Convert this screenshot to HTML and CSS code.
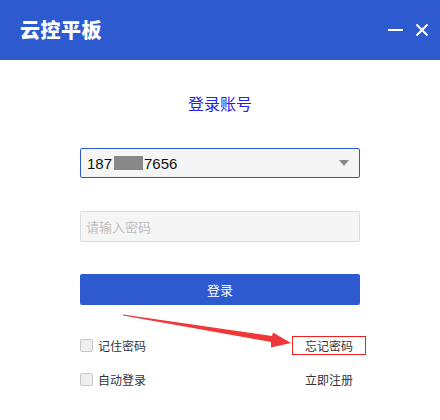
FILE: index.html
```html
<!DOCTYPE html>
<html lang="zh">
<head>
<meta charset="utf-8">
<link rel="stylesheet" href="styles.css">
</head>
<body>
<div class="window">
  <header class="titlebar">
    <div class="app-title">云控平板</div>
    <div class="win-controls">
      <svg class="ctl" width="16" height="14" viewBox="0 0 16 14"><line x1="0" y1="7" x2="15" y2="7" stroke="#fff" stroke-width="2"/></svg>
      <svg class="ctl" width="14" height="14" viewBox="0 0 14 14"><path d="M1.5 1.5 L12.5 12.5 M12.5 1.5 L1.5 12.5" stroke="#fff" stroke-width="2"/></svg>
    </div>
  </header>
  <main class="content">
    <div class="heading">登录账号</div>
    <div class="field select">
      <span class="num">187</span><span class="mask"></span><span class="num">7656</span>
      <span class="caret"></span>
    </div>
    <div class="field pwd">请输入密码</div>
    <button class="login-btn">登录</button>
    <div class="opt-row first">
      <label class="check"><span class="box"></span>记住密码</label>
      <span class="link forgot">忘记密码</span>
    </div>
    <div class="opt-row">
      <label class="check"><span class="box"></span>自动登录</label>
      <span class="link">立即注册</span>
    </div>
  </main>
  <svg class="arrow" width="440" height="420" viewBox="0 0 440 420">
    <polygon points="123,314.5 272,336 273,332.5 291,343 271,347.5 271,342 123,315.5" fill="#f0383a"/>
  </svg>
</div>
</body>
</html>
```
FILE: styles.css
```css
* { box-sizing: border-box; }
html, body { margin: 0; padding: 0; background: #fff; }
body {
  font-family: "Noto Sans CJK SC", "Liberation Sans", sans-serif;
  width: 440px;
  height: 420px;
  overflow: hidden;
}
.window { position: relative; width: 440px; height: 420px; background: #fff; }
.titlebar {
  height: 60px;
  background: #2e5ad0;
  display: flex;
  align-items: center;
  justify-content: space-between;
  padding: 0 11px 0 20px;
}
.app-title {
  color: #fff;
  font-size: 20px;
  font-weight: 900;
  letter-spacing: 0.5px;
  line-height: 20px;
  margin-top: 0px;
}
.win-controls { display: flex; align-items: center; gap: 11px; margin-top: 0px; }
.ctl { display: block; }
.content {
  padding: 32px 80px 0;
  display: flex;
  flex-direction: column;
}
.heading {
  text-align: center;
  color: #2222ee;
  font-size: 16px;
  line-height: 22px;
}
.field {
  height: 30px;
  background: #f5f5f5;
  border: 1px solid #dcdcdc;
  border-radius: 2px;
  display: flex;
  align-items: center;
}
.select {
  margin-top: 34px;
  border-color: #2e5ad0;
  padding-left: 6px;
  position: relative;
}
.num {
  font-family: "Liberation Sans", sans-serif;
  font-size: 15px;
  color: #111;
}
.mask {
  width: 29px;
  height: 14px;
  background: #888;
  margin: 0 1px 0 2px;
}
.caret {
  margin-left: auto;
  margin-right: 10px;
  width: 0; height: 0;
  border-left: 5px solid transparent;
  border-right: 5px solid transparent;
  border-top: 6px solid #8a8a8a;
}
.pwd {
  margin-top: 33px;
  height: 31px;
  padding-left: 5px;
  font-size: 13px;
  color: #c0c0c0;
}
.login-btn {
  margin-top: 32px;
  height: 31px;
  background: #2e5ad0;
  color: #fff;
  border: none;
  border-radius: 2px;
  font-family: "Noto Sans CJK SC", sans-serif;
  font-size: 13px;
  padding: 0;
}
.opt-row {
  display: flex;
  justify-content: space-between;
  align-items: center;
  height: 20px;
  margin-top: 14px;
  font-size: 12px;
  color: #333;
}
.opt-row.first { margin-top: 30px; }
.check { display: flex; align-items: center; gap: 5px; }
.box {
  width: 13px; height: 13px;
  background: #efefef;
  border: 1px solid #c8c8c8;
  border-radius: 2px;
}
.link { margin-right: 7px; position: relative; }
.forgot::after {
  content: "";
  position: absolute;
  left: -13px; right: -13px;
  top: -1px; bottom: -1px;
  border: 1px solid #f02020;
}
.arrow { position: absolute; left: 0; top: 0; pointer-events: none; }
```
